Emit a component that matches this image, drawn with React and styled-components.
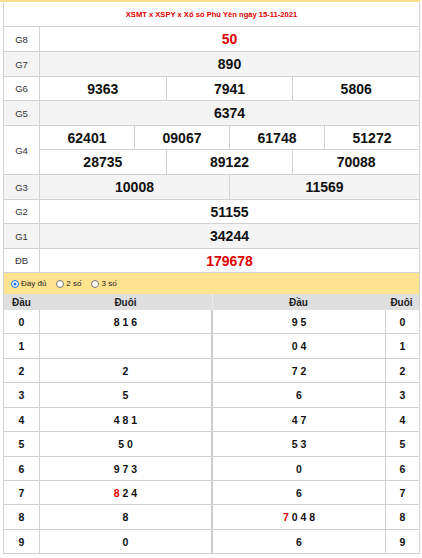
import React from 'react';
import styled, { createGlobalStyle } from 'styled-components';

const GlobalStyle = createGlobalStyle`
  html, body {
    margin: 0;
    padding: 0;
    background: #fff;
  }
  body {
    font-family: "Liberation Sans", Arial, sans-serif;
    color: #111;
  }
`;

const prizes = [
  { name: 'G8', rows: [['50']], h: 25, red: true },
  { name: 'G7', rows: [['890']], h: 25 },
  { name: 'G6', rows: [['9363', '7941', '5806']], h: 24 },
  { name: 'G5', rows: [['6374']], h: 25 },
  { name: 'G4', rows: [['62401', '09067', '61748', '51272'], ['28735', '89122', '70088']], h: 24 },
  { name: 'G3', rows: [['10008', '11569']], h: 25 },
  { name: 'G2', rows: [['51155']], h: 24 },
  { name: 'G1', rows: [['34244']], h: 25 },
  { name: 'ĐB', rows: [['179678']], h: 24, red: true },
];

// digits per đầu/đuôi, red = index of the digit from the special prize
const lotoLeft = [
  { d: [8, 1, 6] }, { d: [] }, { d: [2] }, { d: [5] }, { d: [4, 8, 1] },
  { d: [5, 0] }, { d: [9, 7, 3] }, { d: [8, 2, 4], red: 0 }, { d: [8] }, { d: [0] },
];
const lotoRight = [
  { d: [9, 5] }, { d: [0, 4] }, { d: [7, 2] }, { d: [6] }, { d: [4, 7] },
  { d: [5, 3] }, { d: [0] }, { d: [6] }, { d: [7, 0, 4, 8], red: 0 }, { d: [6] },
];
const lotoHeights = [24, 25, 24, 25, 24, 25, 24, 24, 25, 24];

const App = () => {
  return (
    <>
      <GlobalStyle />
      <TopLine />
      <Board>
        <Title>XSMT x XSPY x Xổ số Phú Yên ngày 15-11-2021</Title>

        {prizes.map((p, i) => (
          <PrizeRow key={p.name} $alt={i % 2 === 1}>
            <Label>{p.name}</Label>
            <Lines>
              {p.rows.map((line, j) => (
                <Line key={j} $h={p.h}>
                  {line.map((n, k) => (
                    <Num key={k} $red={p.red}>{n}</Num>
                  ))}
                </Line>
              ))}
            </Lines>
          </PrizeRow>
        ))}

        <Filter>
          <Option><Radio $checked />Đầy đủ</Option>
          <Option><Radio />2 số</Option>
          <Option><Radio />3 số</Option>
        </Filter>

        <Loto>
          <Half $side="left">
            <Head $side="left">
              <span>Đầu</span>
              <span>Đuôi</span>
            </Head>
            {lotoLeft.map((r, i) => (
              <LotoRow key={i} $side="left" $h={lotoHeights[i]}>
                <Key>{i}</Key>
                <Tails><span>{renderDigits(r)}</span></Tails>
              </LotoRow>
            ))}
          </Half>
          <Half $side="right">
            <Head $side="right">
              <span>Đầu</span>
              <span>Đuôi</span>
            </Head>
            {lotoRight.map((r, i) => (
              <LotoRow key={i} $side="right" $h={lotoHeights[i]}>
                <Tails><span>{renderDigits(r)}</span></Tails>
                <Key>{i}</Key>
              </LotoRow>
            ))}
          </Half>
        </Loto>
      </Board>
    </>
  );
};

function renderDigits(r) {
  return r.d.map((n, i) => (
    <React.Fragment key={i}>
      {i > 0 && ' '}
      {r.red === i ? <Red>{n}</Red> : n}
    </React.Fragment>
  ));
}

export default App;

const line = '#d2d2d2';

const TopLine = styled.div`
  width: 420px;
  height: 2px;
  background: #ffe08a;
`;

const Board = styled.div`
  width: 417px;
  margin-left: 3px;
  box-sizing: border-box;
  border-left: 1px solid ${line};
  border-right: 1px solid ${line};
`;

const Title = styled.div`
  height: 25px;
  box-sizing: border-box;
  border-bottom: 1px solid ${line};
  display: flex;
  align-items: center;
  justify-content: center;
  color: #e00000;
  font-size: 7.6px;
  font-weight: bold;
  padding-top: 1px;
`;

const PrizeRow = styled.div`
  display: flex;
  background: ${(p) => (p.$alt ? '#f4f4f4' : '#fff')};
  border-bottom: 1px solid ${line};
`;

const Label = styled.div`
  width: 35px;
  flex-shrink: 0;
  border-right: 1px solid ${line};
  display: flex;
  align-items: center;
  justify-content: center;
  font-size: 9.5px;
  color: #333;
`;

const Lines = styled.div`
  flex: 1;
  display: flex;
  flex-direction: column;
`;

const Line = styled.div`
  display: flex;
  height: ${(p) => p.$h - 1}px;
  & + & {
    border-top: 1px solid ${line};
    height: ${(p) => p.$h}px;
  }
`;

const Num = styled.div`
  flex: 1;
  display: flex;
  align-items: center;
  justify-content: center;
  font-size: 14px;
  font-weight: bold;
  color: ${(p) => (p.$red ? '#e00000' : '#111')};
  & + & {
    border-left: 1px solid ${line};
  }
`;

const Filter = styled.div`
  height: 21px;
  background: #ffe38f;
  display: flex;
  align-items: center;
  gap: 10px;
  padding-left: 7px;
  font-size: 8px;
  color: #222;
`;

const Option = styled.label`
  display: flex;
  align-items: center;
  gap: 2px;
`;

const Radio = styled.span`
  width: 8px;
  height: 8px;
  box-sizing: border-box;
  border-radius: 50%;
  background: #fff;
  border: 1px solid ${(p) => (p.$checked ? '#1a73e8' : '#777')};
  box-shadow: ${(p) => (p.$checked ? 'inset 0 0 0 1.5px #fff, inset 0 0 0 4px #1a73e8' : 'none')};
`;

const Loto = styled.div`
  display: flex;
`;

const Half = styled.div`
  width: ${(p) => (p.$side === 'left' ? '208px' : 'auto')};
  flex: ${(p) => (p.$side === 'left' ? '0 0 208px' : '1')};
  display: flex;
  flex-direction: column;
`;

const Head = styled.div`
  height: 16px;
  background: #dfdfdf;
  display: grid;
  grid-template-columns: ${(p) => (p.$side === 'left' ? '35px 1fr' : '1fr 35px')};
  align-items: center;
  font-size: 10px;
  font-weight: bold;
  color: #222;
  text-align: center;
  border-left: ${(p) => (p.$side === 'right' ? '1px solid #ececec' : 'none')};
`;

const LotoRow = styled.div`
  height: ${(p) => p.$h}px;
  box-sizing: border-box;
  border-bottom: 1px solid ${line};
  ${(p) => (p.$side === 'left' ? `border-right: 1px solid #cdcdcd;` : `border-left: 1px solid #cdcdcd;`)}
  display: grid;
  grid-template-columns: ${(p) => (p.$side === 'left' ? '35px 1fr' : '1fr 34px')};
  font-size: 10.5px;
  font-weight: bold;
  color: #111;
  & > * + * {
    border-left: 1px solid ${line};
  }
`;

const Key = styled.div`
  display: flex;
  align-items: center;
  justify-content: center;
`;

const Tails = styled.div`
  display: flex;
  align-items: center;
  justify-content: center;
  white-space: pre;
`;

const Red = styled.span`
  color: #e00000;
`;
